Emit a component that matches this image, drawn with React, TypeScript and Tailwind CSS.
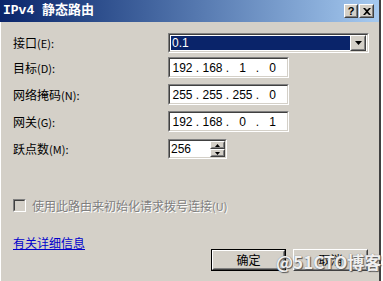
import React from "react";

const cjk = { fontFamily: '"Noto Sans CJK SC", "Liberation Sans", sans-serif' };
const sans = { fontFamily: '"Liberation Sans", "Noto Sans CJK SC", sans-serif' };

function Sunken({ className = "", children }: { className?: string; children?: React.ReactNode }) {
  return (
    <div className={`border border-t-[#808080] border-l-[#808080] border-b-white border-r-white ${className}`}>
      <div className="h-full w-full border border-t-[#404040] border-l-[#404040] border-b-[#D4D0C8] border-r-[#D4D0C8] bg-white">
        {children}
      </div>
    </div>
  );
}

function Raised({ className = "", children }: { className?: string; children?: React.ReactNode }) {
  return (
    <div className={`border border-t-white border-l-white border-b-[#404040] border-r-[#404040] bg-[#D4D0C8] ${className}`}>
      <div className="flex h-full w-full items-center justify-center border border-t-[#D4D0C8] border-l-[#D4D0C8] border-b-[#808080] border-r-[#808080]">
        {children}
      </div>
    </div>
  );
}

function IpBox({ parts }: { parts: string[] }) {
  return (
    <Sunken className="h-[21px] w-[121px]">
      <div className="flex h-full items-center text-[12px] text-black" style={sans}>
        {parts.map((p, i) => (
          <React.Fragment key={i}>
            <span className="w-[25px] text-center">{p}</span>
            {i < 3 && <span className="w-[5px] text-center">.</span>}
          </React.Fragment>
        ))}
      </div>
    </Sunken>
  );
}

function Label({ text, k }: { text: string; k: string }) {
  return (
    <div className="w-[155px] text-[12px] leading-[14px] text-black" style={cjk}>
      {text}
      <span className="text-[11px]">({k}):</span>
    </div>
  );
}

export default function App() {
  return (
    <div className="relative flex h-[281px] w-[383px] overflow-hidden bg-white">
      <div className="flex h-full w-[381px] flex-col border-r-2 border-r-[#404040] bg-[#D4D0C8]">
        {/* Title bar */}
        <div className="flex h-[22px] items-center bg-gradient-to-r from-[#0A246A] to-[#A6CAF0] pl-[3px] pr-[5px]">
          <span className="text-[13px] font-bold text-white" style={{ fontFamily: '"Liberation Mono", "Noto Sans CJK SC", monospace' }}>
            IPv4 静态路由
          </span>
          <div className="ml-auto flex gap-[1px]">
            <Raised className="h-[14px] w-[14px]">
              <span className="text-[11px] font-bold leading-none text-black" style={sans}>?</span>
            </Raised>
            <Raised className="h-[14px] w-[15px]">
              <svg width="8" height="7" viewBox="0 0 8 7">
                <path d="M0 0 L2 0 L4 2 L6 0 L8 0 L5 3.5 L8 7 L6 7 L4 5 L2 7 L0 7 L3 3.5 Z" fill="black" />
              </svg>
            </Raised>
          </div>
        </div>

        {/* Body */}
        <div className="flex flex-1 flex-col border-l border-l-white pl-[12px] pr-[10px] pt-[11px]">
          <div className="flex items-center">
            <Label text="接口" k="E" />
            <Sunken className="h-[20px] w-[201px]">
              <div className="flex h-full items-center p-[1px]">
                <div className="flex h-full flex-1 items-center bg-[#0A246A] pl-[1px] text-[12px] text-white" style={sans}>
                  0.1
                </div>
                <Raised className="h-[16px] w-[16px]">
                  <svg width="7" height="4" viewBox="0 0 7 4">
                    <path d="M0 0 H7 L3.5 4 Z" fill="black" />
                  </svg>
                </Raised>
              </div>
            </Sunken>
          </div>

          <div className="mt-[4px] flex items-center">
            <Label text="目标" k="D" />
            <IpBox parts={["192", "168", "1", "0"]} />
          </div>
          <div className="mt-[6px] flex items-center">
            <Label text="网络掩码" k="N" />
            <IpBox parts={["255", "255", "255", "0"]} />
          </div>
          <div className="mt-[6px] flex items-center">
            <Label text="网关" k="G" />
            <IpBox parts={["192", "168", "0", "1"]} />
          </div>
          <div className="mt-[7px] flex items-center">
            <Label text="跃点数" k="M" />
            <Sunken className="h-[20px] w-[59px]">
              <div className="flex h-full items-center">
                <span className="flex-1 pl-[1px] text-[12px] text-black" style={sans}>256</span>
                <div className="flex h-full w-[15px] flex-col">
                  <Raised className="flex-1">
                    <svg width="5" height="3" viewBox="0 0 5 3"><path d="M2.5 0 L5 3 H0 Z" fill="black" /></svg>
                  </Raised>
                  <Raised className="flex-1">
                    <svg width="5" height="3" viewBox="0 0 5 3"><path d="M0 0 H5 L2.5 3 Z" fill="black" /></svg>
                  </Raised>
                </div>
              </div>
            </Sunken>
          </div>

          <div className="mt-[40px] flex h-[13px] items-center">
            <Sunken className="h-[13px] w-[13px]">
              <div className="h-full w-full bg-[#D4D0C8]" />
            </Sunken>
            <span className="ml-[6px] text-[12px] leading-[13px] text-[#808080] [text-shadow:1px_1px_0_#ffffff]" style={cjk}>
              使用此路由来初始化请求拨号连接<span className="text-[11px]">(U)</span>
            </span>
          </div>

          <div className="mt-[24px] flex h-[13px]">
            <span className="text-[12px] leading-[13px] text-[#0000CC] underline" style={cjk}>有关详细信息</span>
          </div>

          <div className="flex justify-end gap-[7px] pr-[1px]">
            <div className="h-[22px] w-[75px] border border-black">
              <Raised className="h-full w-full">
                <span className="text-[12px] leading-[14px] text-black" style={cjk}>确定</span>
              </Raised>
            </div>
            <Raised className="h-[22px] w-[75px]">
              <span className="text-[12px] leading-[14px] text-black" style={cjk}>取消</span>
            </Raised>
          </div>
        </div>
      </div>

      <div
        className="absolute left-[276px] top-[249px] text-[17px] font-bold text-white/90 [text-shadow:0_0_1px_#666,1px_1px_1px_#555]"
        style={cjk}
      >
        @51CTO博客
      </div>
    </div>
  );
}
